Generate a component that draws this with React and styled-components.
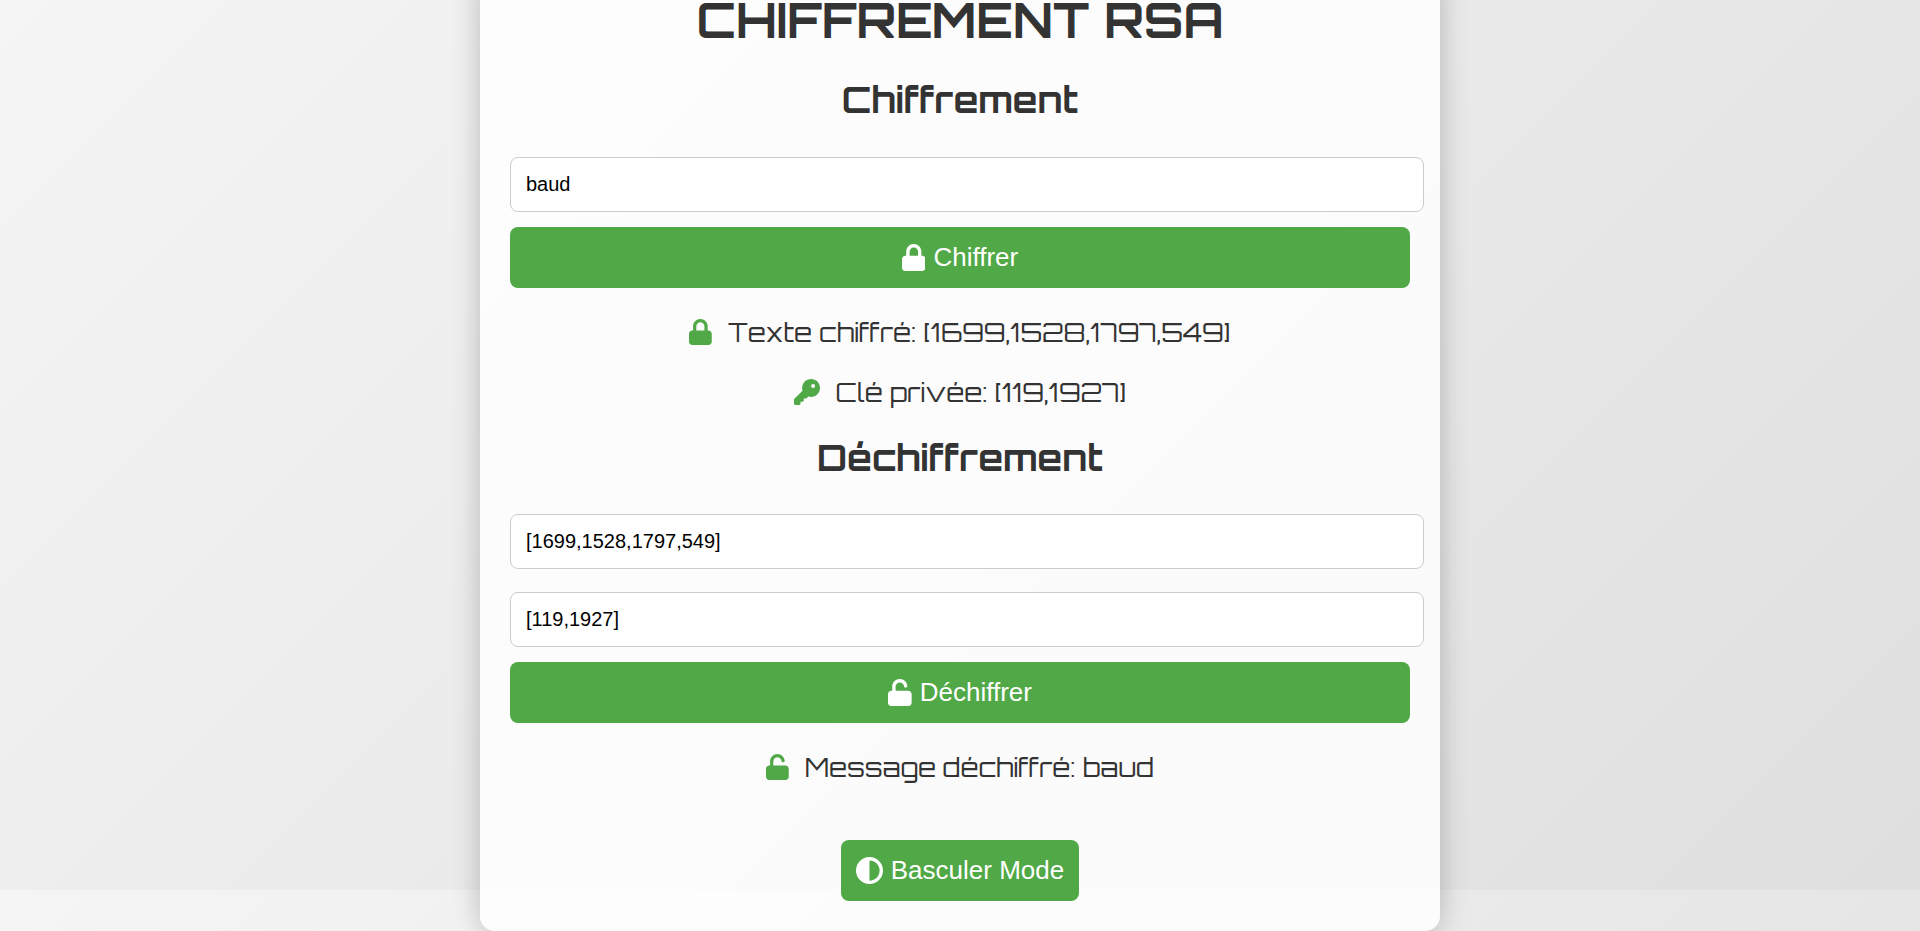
import React, { useState } from "react";
import styled, { createGlobalStyle } from "styled-components";
import { FaKey, FaCircleHalfStroke } from "react-icons/fa6";

const GlobalStyle = createGlobalStyle`
  body {
    margin: 0;
    color: #333;
    font-family: Orbitron, "DejaVu Sans", sans-serif;
    background-color: #e8e8e8;
    background-image: linear-gradient(135deg, #f5f5f5, #dfdfdf);
    background-size: 100% 100vh;
    background-position: 0 -41px;
    overflow-x: hidden;
  }
`;

const Page = styled.main`
  display: flex;
  justify-content: center;
`;

const Card = styled.div`
  box-sizing: border-box;
  width: 50%;
  min-width: 560px;
  margin-top: -30px;
  padding: 30px;
  border-radius: 15px;
  background: rgba(255, 255, 255, 0.83);
  box-shadow: 0 0 28px rgba(0, 0, 0, 0.23);
  text-align: center;
`;

const Title = styled.h1`
  margin: 0 0 10px;
  font-size: 48px;
  line-height: 40px;
  text-transform: uppercase;
`;

const Section = styled.section`
  display: flex;
  flex-direction: column;
`;

const SectionTitle = styled.h2`
  margin: ${(p) => (p.$tight ? "11px 0 23px" : "25px 0 24px")};
  font-size: 36px;
  line-height: 50px;
`;

const Field = styled.input`
  box-sizing: content-box;
  width: calc(100% - 18px);
  height: 23px;
  margin: 8px 0 15px;
  padding: 15px;
  border: 1px solid #ccc;
  border-radius: 8px;
  background: #fff;
  color: #000;
  font: 20px "Liberation Sans", Arial, sans-serif;
`;

const Button = styled.button`
  display: ${(p) => (p.$compact ? "inline-flex" : "flex")};
  align-items: center;
  justify-content: center;
  gap: 8px;
  padding: 15px;
  border: 0;
  border-radius: 8px;
  background: #50a846;
  color: #fff;
  font: 26px/31px "Liberation Sans", Arial, sans-serif;
  cursor: pointer;

  svg {
    height: 27px;
    width: auto;
  }
`;

const Result = styled.p`
  display: flex;
  align-items: center;
  justify-content: center;
  gap: 16px;
  margin: 0;
  padding: 13px 0;
  font-size: 26px;
  line-height: 34px;

  svg {
    height: 26px;
    width: auto;
    color: #50a846;
  }
`;

const Results = styled.div`
  margin-top: 14px;
`;

const Footer = styled.footer`
  margin-top: 43px;
`;

const LockIcon = () => (
  <svg viewBox="0 0 448 512" fill="currentColor" aria-hidden="true">
    <path d="M384 224h-16v-80C368 64.5 303.5 0 224 0S80 64.5 80 144v80H64c-35.3 0-64 28.7-64 64v160c0 35.3 28.7 64 64 64h320c35.3 0 64-28.7 64-64V288c0-35.3-28.7-64-64-64zM144 144c0-44.1 35.9-80 80-80s80 35.9 80 80v80H144v-80z" />
  </svg>
);

const UnlockIcon = () => (
  <svg viewBox="0 0 448 512" fill="currentColor" aria-hidden="true">
    <path d="M144 144c0-44.1 35.9-80 80-80 38 0 70 26 78 62 3 18 8 34 24 34h26c9 0 16-7 16-16C368 64.5 303.5 0 224 0S80 64.5 80 144v80H64c-35.3 0-64 28.7-64 64v160c0 35.3 28.7 64 64 64h320c35.3 0 64-28.7 64-64V288c0-35.3-28.7-64-64-64H144v-80z" />
  </svg>
);

export default function App() {
  const [plain, setPlain] = useState("baud");
  const [cipher, setCipher] = useState("[1699,1528,1797,549]");
  const [key, setKey] = useState("[119,1927]");
  return (
    <>
      <GlobalStyle />
      <Page>
        <Card>
          <Title>Chiffrement RSA</Title>
          <Section>
            <SectionTitle>Chiffrement</SectionTitle>
            <Field aria-label="Texte à chiffrer" value={plain} onChange={(e) => setPlain(e.target.value)} />
            <Button type="button"><LockIcon />Chiffrer</Button>
            <Results>
              <Result><LockIcon />Texte chiffré: [1699,1528,1797,549]</Result>
              <Result><FaKey />Clé privée: [119,1927]</Result>
            </Results>
          </Section>
          <Section>
            <SectionTitle $tight>Déchiffrement</SectionTitle>
            <Field aria-label="Texte chiffré" value={cipher} onChange={(e) => setCipher(e.target.value)} />
            <Field aria-label="Clé privée" value={key} onChange={(e) => setKey(e.target.value)} />
            <Button type="button"><UnlockIcon />Déchiffrer</Button>
            <Results>
              <Result><UnlockIcon />Message déchiffré: baud</Result>
            </Results>
          </Section>
          <Footer>
            <Button type="button" $compact><FaCircleHalfStroke />Basculer Mode</Button>
          </Footer>
        </Card>
      </Page>
    </>
  );
}
